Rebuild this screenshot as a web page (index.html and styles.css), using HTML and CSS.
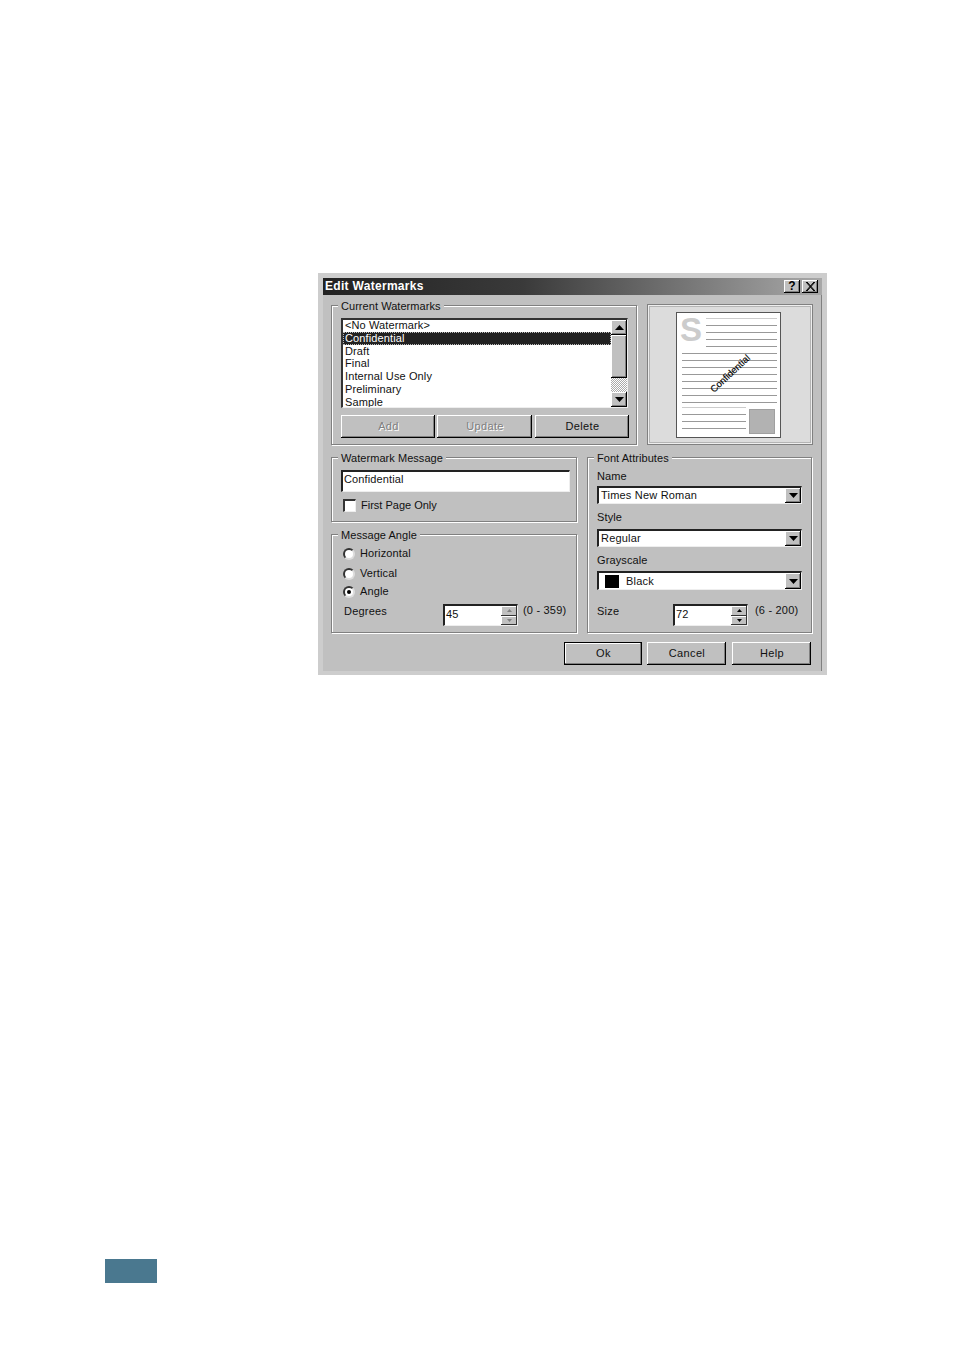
FILE: index.html
```html
<!DOCTYPE html>
<html lang="en">
<head>
<meta charset="utf-8">
<title>Edit Watermarks</title>
<link rel="stylesheet" href="styles.css">
</head>
<body>
<div class="dialog">
  <div class="titlebar">
    <span class="title">Edit Watermarks</span>
    <span class="title-btns">
      <span class="tbtn">?</span>
      <span class="tbtn"><svg width="10" height="9" viewBox="0 0 10 9"><path d="M1 0 L9 9 M2 0 L10 9 M9 0 L1 9 M10 0 L2 9" stroke="#000" stroke-width="1" fill="none"/></svg></span>
    </span>
  </div>
  <div class="row-top">
    <div class="group g-current">
      <span class="legend">Current Watermarks</span>
      <div class="listbox">
        <ul class="items">
          <li>&lt;No Watermark&gt;</li>
          <li class="sel">Confidential</li>
          <li>Draft</li>
          <li>Final</li>
          <li>Internal Use Only</li>
          <li>Preliminary</li>
          <li>Sample</li>
        </ul>
        <div class="scroll">
          <span class="sbtn"><svg width="9" height="5" viewBox="0 0 9 5"><path d="M4.5 0 L9 5 H0 Z"/></svg></span>
          <span class="thumb"></span>
          <span class="track"></span>
          <span class="sbtn"><svg width="9" height="5" viewBox="0 0 9 5"><path d="M0 0 H9 L4.5 5 Z"/></svg></span>
        </div>
      </div>
      <div class="btn-row">
        <span class="btn dis b-add">Add</span>
        <span class="btn dis b-upd">Update</span>
        <span class="btn b-del">Delete</span>
      </div>
    </div>
    <div class="preview">
      <div class="preview-in">
        <svg class="page" width="105" height="126" viewBox="0 0 105 126">
          <rect x="0.5" y="0.5" width="104" height="125" fill="#fff" stroke="#555"/>
          <text x="4" y="29" class="s-mark">S</text>
          <g stroke="#999" stroke-width="1">
            <path stroke="#ccc" d="M30 6.5H101"/>
            <path d="M30 13.5H101M30 20.5H101M30 27.5H101M30 34.5H101"/>
            <path d="M6 41.5H101M6 48.5H101M6 55.5H101M6 62.5H101M6 69.5H101M6 76.5H101M6 83.5H101M6 90.5H101"/>
            <path stroke="#ccc" d="M6 95.5H70"/>
            <path d="M6 102.5H70M6 109.5H70M6 116.5H70"/>
          </g>
          <rect x="73.5" y="97.5" width="25" height="24" fill="#b2b2b2" stroke="#a0a0a0"/>
          <text x="38" y="81" class="wm" transform="rotate(-43 38 81)">Confidential</text>
        </svg>
      </div>
    </div>
  </div>
  <div class="row-mid">
    <div class="col-left">
      <div class="group g-msg">
        <span class="legend">Watermark Message</span>
        <div class="input">Confidential</div>
        <div class="check-row"><span class="check"></span><span>First Page Only</span></div>
      </div>
      <div class="group g-angle">
        <span class="legend">Message Angle</span>
        <div class="radio-row r1"><span class="radio"></span><span>Horizontal</span></div>
        <div class="radio-row r2"><span class="radio"></span><span>Vertical</span></div>
        <div class="radio-row r3"><span class="radio on"></span><span>Angle</span></div>
        <div class="spin-row">
          <span class="spin-label">Degrees</span>
          <div class="spin">
            <span class="spin-val">45</span>
            <span class="spin-btns">
              <span class="sp dim"><svg width="5" height="3" viewBox="0 0 5 3"><path d="M2.5 0 L5 3 H0 Z"/></svg></span>
              <span class="sp dim"><svg width="5" height="3" viewBox="0 0 5 3"><path d="M0 0 H5 L2.5 3 Z"/></svg></span>
            </span>
          </div>
          <span class="range">(0 - 359)</span>
        </div>
      </div>
    </div>
    <div class="group g-font">
      <span class="legend">Font Attributes</span>
      <div class="flabel">Name</div>
      <div class="combo"><span class="cval">Times New Roman</span><span class="cbtn"><svg width="9" height="5" viewBox="0 0 9 5"><path d="M0 0 H9 L4.5 5 Z"/></svg></span></div>
      <div class="flabel l2">Style</div>
      <div class="combo"><span class="cval">Regular</span><span class="cbtn"><svg width="9" height="5" viewBox="0 0 9 5"><path d="M0 0 H9 L4.5 5 Z"/></svg></span></div>
      <div class="flabel l3">Grayscale</div>
      <div class="combo c3"><span class="cval"><i class="swatch"></i>Black</span><span class="cbtn"><svg width="9" height="5" viewBox="0 0 9 5"><path d="M0 0 H9 L4.5 5 Z"/></svg></span></div>
      <div class="spin-row sr2">
        <span class="spin-label s2">Size</span>
        <div class="spin">
          <span class="spin-val">72</span>
          <span class="spin-btns">
            <span class="sp"><svg width="5" height="3" viewBox="0 0 5 3"><path d="M2.5 0 L5 3 H0 Z"/></svg></span>
            <span class="sp"><svg width="5" height="3" viewBox="0 0 5 3"><path d="M0 0 H5 L2.5 3 Z"/></svg></span>
          </span>
        </div>
        <span class="range r2x">(6 - 200)</span>
      </div>
    </div>
  </div>
  <div class="footer">
    <span class="btn default">Ok</span>
    <span class="btn b-cancel">Cancel</span>
    <span class="btn b-help">Help</span>
  </div>
</div>
<div class="tab"></div>
</body>
</html>
```
FILE: styles.css
```css
* { box-sizing: border-box; }
html, body { margin: 0; padding: 0; background: #fff; }
body {
  width: 954px;
  height: 1346px;
  overflow: hidden;
  font: 11px/13px "Liberation Sans", Arial, sans-serif;
  color: #111;
}
.dialog {
  width: 509px;
  height: 402px;
  margin: 273px 0 0 318px;
  background: #c0c0c0;
  border: 5px solid #cdcdcd;
  border-bottom-width: 4px;
  box-shadow: inset -1px 0 0 #808080;
}
.titlebar {
  height: 17px;
  display: flex;
  align-items: center;
  justify-content: space-between;
  padding: 0 4px 0 2px;
  background: linear-gradient(90deg, #222 0%, #3a3a3a 40%, #a8a8a8 100%);
}
.title { color: #fff; font-weight: 700; font-size: 12px; letter-spacing: 0.3px; }
.title-btns { display: flex; gap: 2px; }
.tbtn {
  width: 16px;
  height: 13px;
  background: #c0c0c0;
  color: #000;
  font-weight: 700;
  font-size: 12px;
  line-height: 13px;
  display: flex;
  align-items: center;
  justify-content: center;
  box-shadow: inset -1px -1px 0 #000, inset 1px 1px 0 #fff, inset -2px -2px 0 #808080;
}
.row-top { display: flex; margin: 9px 0 0 8px; height: 141px; }
.group {
  position: relative;
  border: 1px solid #808080;
  box-shadow: 1px 1px 0 #fff, inset 1px 1px 0 #fff;
}
.legend {
  position: absolute;
  top: -6px;
  left: 6px;
  padding: 0 3px 0 3px;
  background: #c0c0c0;
  white-space: nowrap;
  letter-spacing: 0.05px;
}
.g-current { width: 306px; height: 140px; margin-top: 1px; padding: 12px 0 0 9px; }
.listbox {
  width: 287px;
  height: 90px;
  display: flex;
  background: #fff;
  border-top: 2px solid #333;
  border-left: 2px solid #333;
  border-right: 1px solid #eee;
  border-bottom: 1px solid #eee;
  overflow: hidden;
}
.items { list-style: none; margin: -1px 0 0; padding: 0; flex: 1; }
.items li { height: 12.8px; padding-left: 2px; line-height: 13px; white-space: nowrap; letter-spacing: 0.12px; }
.items li.sel { background: #222; color: #fff; outline: 1px dotted #bbb; outline-offset: -1px; }
.scroll { width: 16px; display: flex; flex-direction: column; }
.sbtn {
  height: 15px;
  flex: none;
  background: #c0c0c0;
  display: flex;
  align-items: center;
  justify-content: center;
  box-shadow: inset -1px -1px 0 #000, inset 1px 1px 0 #fff, inset -2px -2px 0 #808080;
}
.thumb {
  height: 43px;
  flex: none;
  background: #c0c0c0;
  box-shadow: inset -1px -1px 0 #000, inset 1px 1px 0 #fff, inset -2px -2px 0 #808080;
}
.track {
  flex: 1;
  background: repeating-conic-gradient(#fff 0 25%, #aaa 0 50%) 0 0 / 2px 2px;
}
.btn-row { display: flex; margin-top: 7px; }
.btn {
  height: 23px;
  background: #c0c0c0;
  display: flex;
  align-items: center;
  justify-content: center;
  padding-left: 1px;
  letter-spacing: 0.35px;
  box-shadow: inset -1px -1px 0 #000, inset 1px 1px 0 #fff, inset -2px -2px 0 #808080;
}
.b-add { width: 94px; margin-right: 2px; }
.b-upd { width: 95px; margin-right: 3px; }
.b-del { width: 94px; }
.dis { color: #808080; text-shadow: 1px 1px 0 #fff; }
.preview {
  width: 166px;
  height: 141px;
  margin-left: 10px;
  padding: 1px;
  border: 1px solid #808080;
  background: #fff;
  box-shadow: inset 0 0 0 1px #eee;
}
.preview-in {
  height: 100%;
  padding: 5px 0 0 26px;
  background: #dcdcdc;
  border: 1px solid #b4b4b4;
}
.page { display: block; }
.s-mark { font: 700 33px "Liberation Sans", Arial, sans-serif; fill: #ccc; }
.wm { font: 9.5px "Liberation Sans", Arial, sans-serif; fill: #000; stroke: #000; stroke-width: 0.15; }
.row-mid { display: flex; margin: 12px 0 0 8px; }
.col-left { width: 246px; display: flex; flex-direction: column; gap: 12px; }
.g-msg { height: 65px; padding: 12px 0 0 9px; }
.input {
  width: 229px;
  height: 22px;
  padding: 0 0 0 1px;
  background: #fff;
  border-top: 2px solid #222;
  border-left: 2px solid #222;
  border-right: 1px solid #eee;
  border-bottom: 1px solid #eee;
  line-height: 14px;
  letter-spacing: 0.12px;
}
.check-row { display: flex; align-items: center; gap: 5px; margin: 7px 0 0 2px; letter-spacing: 0; }
.check {
  width: 13px;
  height: 13px;
  background: #fff;
  border-top: 2px solid #333;
  border-left: 2px solid #333;
  border-right: 1px solid #eee;
  border-bottom: 1px solid #eee;
}
.g-angle { height: 99px; padding-top: 12px; }
.radio-row { display: flex; align-items: center; gap: 5px; padding-left: 11px; height: 13px; letter-spacing: 0.12px; }
.r2 { margin-top: 7px; }
.r3 { margin-top: 5px; }
.radio {
  width: 12px;
  height: 12px;
  border-radius: 50%;
  background: #fff;
  border: 2px solid;
  border-color: #333 #ddd #ddd #333;
  display: block;
  position: relative;
}
.radio.on::after {
  content: "";
  position: absolute;
  left: 2px;
  top: 2px;
  width: 4px;
  height: 4px;
  border-radius: 50%;
  background: #000;
}
.spin-row { display: flex; align-items: flex-start; margin-top: 6px; padding-left: 12px; letter-spacing: 0.2px; }
.spin-label { width: 99px; padding-top: 1px; }
.spin {
  width: 75px;
  height: 22px;
  display: flex;
  background: #fff;
  border-top: 2px solid #222;
  border-left: 2px solid #222;
  border-right: 1px solid #eee;
  border-bottom: 1px solid #eee;
}
.spin-val { flex: 1; padding: 2px 0 0 1px; }
.spin-btns { width: 16px; display: flex; flex-direction: column; }
.sp {
  flex: 1;
  background: #c0c0c0;
  display: flex;
  align-items: center;
  justify-content: center;
  box-shadow: inset -1px -1px 0 #333, inset 1px 1px 0 #fff;
}
.sp.dim svg { fill: #808080; }
.range { margin-left: 5px; white-space: nowrap; }
.g-font { width: 225px; height: 176px; margin-left: 10px; padding: 12px 0 0 9px; }
.flabel { height: 13px; letter-spacing: 0.12px; }
.l2 { margin-top: 7px; }
.l3 { margin-top: 7px; }
.combo {
  width: 205px;
  height: 18px;
  margin-top: 3px;
  display: flex;
  align-items: center;
  justify-content: space-between;
  background: #fff;
  border-top: 2px solid #222;
  border-left: 2px solid #222;
  border-right: 1px solid #eee;
  border-bottom: 1px solid #eee;
}
.l2 + .combo { margin-top: 5px; }
.l3 + .combo { margin-top: 4px; height: 19px; }
.cval { padding-left: 2px; letter-spacing: 0.2px; display: flex; align-items: center; white-space: nowrap; }
.swatch { width: 14px; height: 13px; background: #000; margin: 0 7px 0 4px; display: block; }
.cbtn {
  width: 16px;
  height: 100%;
  background: #c0c0c0;
  display: flex;
  align-items: center;
  justify-content: center;
  box-shadow: inset -1px -1px 0 #000, inset 1px 1px 0 #fff, inset -2px -2px 0 #808080;
}
.sr2 { margin-top: 14px; padding-left: 0; }
.s2 { width: 76px; }
.r2x { margin-left: 7px; }
.footer { display: flex; margin: 9px 0 0 241px; }
.footer .btn { width: 79px; }
.default { width: 78px !important; box-shadow: inset 0 0 0 1px #000, inset -2px -2px 0 #808080, inset 2px 2px 0 #fff; }
.b-cancel { margin-left: 5px; }
.b-help { margin-left: 6px; }
.tab {
  width: 52px;
  height: 24px;
  margin: 584px 0 0 105px;
  background: #4a788f;
}
```
